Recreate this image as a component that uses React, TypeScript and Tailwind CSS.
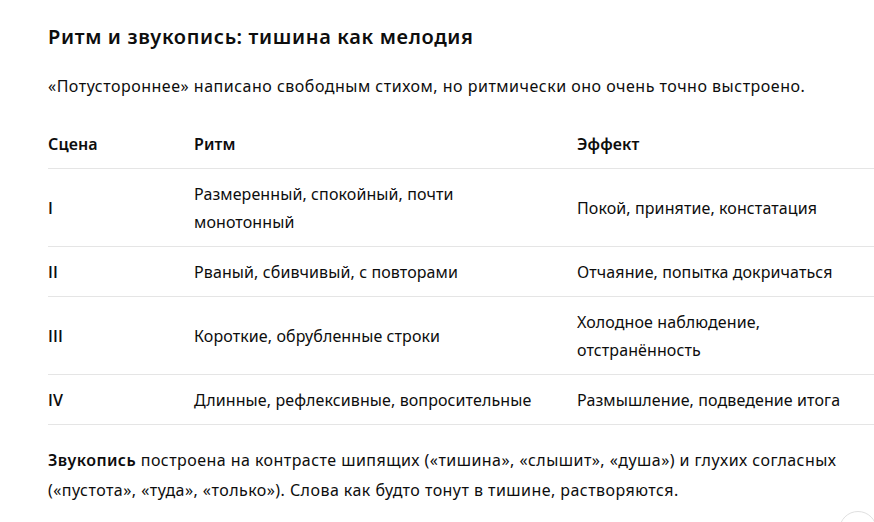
const rows = [
  { scene: 'I', rhythm: 'Размеренный, спокойный, почти монотонный', effect: 'Покой, принятие, констатация' },
  { scene: 'II', rhythm: 'Рваный, сбивчивый, с повторами', effect: 'Отчаяние, попытка докричаться' },
  { scene: 'III', rhythm: 'Короткие, обрубленные строки', effect: 'Холодное наблюдение, отстранённость' },
  { scene: 'IV', rhythm: 'Длинные, рефлексивные, вопросительные', effect: 'Размышление, подведение итога' },
];

export default function App() {
  return (
    <div className="relative h-[522px] w-[874px] overflow-hidden bg-white font-['Noto_Sans',sans-serif] text-[16px] tracking-[0.45px] text-[#0d0d0d]">
      <div className="pl-[48px] pt-[23px]">
        <h3 className="text-[20px] font-semibold leading-7 tracking-[0.65px]">Ритм и звукопись: тишина как мелодия</h3>
        <p className="mt-[21px] leading-7 tracking-[0.5px]">
          «Потустороннее» написано свободным стихом, но ритмически оно очень точно выстроено.
        </p>

        {/* Table */}
        <div className="mt-[19px] w-[840px] tracking-[0.1px]">
          <div className="grid grid-cols-[146px_383px_1fr] border-b border-[#e5e5e5] py-[10.5px] font-semibold leading-7">
            <div>Сцена</div>
            <div>Ритм</div>
            <div>Эффект</div>
          </div>
          {rows.map((r) => (
            <div key={r.scene} className="grid grid-cols-[146px_383px_1fr] items-center border-b border-[#e5e5e5] py-[10.5px] leading-7">
              <div className="font-['Open_Sans',sans-serif] font-semibold">{r.scene}</div>
              <div className="pr-[40px]">{r.rhythm}</div>
              <div className="pr-[16px]">{r.effect}</div>
            </div>
          ))}
        </div>

        <p className="mt-[20px] leading-[30px]">
          <strong className="font-semibold">Звукопись</strong> построена на контрасте шипящих («тишина», «слышит», «душа») и глухих согласных
          («пустота», «туда», «только»). Слова как будто тонут в тишине, растворяются.
        </p>
      </div>

      {/* scroll button */}
      <div className="absolute left-[839px] top-[511px] h-[38px] w-[38px] rounded-full border border-[#e0e0e0] bg-white" />
    </div>
  );
}
